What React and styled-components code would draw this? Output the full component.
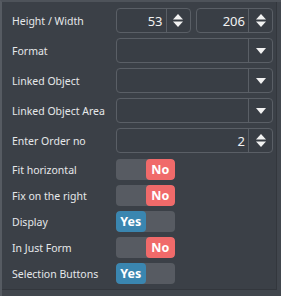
import React from 'react'
import styled, { createGlobalStyle } from 'styled-components'

const Global = createGlobalStyle`
    body {
        margin: 0;
        background: #41464d;
        font-family: "Noto Sans", "Open Sans", sans-serif;
    }
`

const Frame = styled.div`
    width: 281px;
    height: 296px;
    box-sizing: border-box;
    border-left: 2px solid #565b62;
    border-top: 2px solid #4e535a;
    background: #41464d;
`

const Panel = styled.div`
    width: 275px;
    height: 288px;
    box-sizing: border-box;
    background: #3b4047;
    border-right: 1px solid #33373d;
    border-bottom: 1px solid #33373d;
    padding: 6px 0 0 10px;
    display: flex;
    flex-direction: column;
`

const Row = styled.div`
    display: flex;
    align-items: center;
    height: ${p => p.$h}px;
    margin-bottom: ${p => p.$gap}px;
`

const Label = styled.div`
    width: 104px;
    flex: none;
    color: #e6e8ea;
    font-size: 10.5px;
    white-space: nowrap;
`

const Controls = styled.div`
    display: flex;
    gap: 5px;
    width: 157px;
    height: 100%;
`

const Box = styled.div`
    flex: ${p => p.$flex || 1};
    display: flex;
    box-sizing: border-box;
    border: 1px solid #5a5f66;
    border-radius: 4px;
    background: #393e45;
    height: 100%;
`

const Value = styled.div`
    flex: 1;
    display: flex;
    align-items: center;
    justify-content: flex-end;
    padding-right: 3px;
    color: #f2f2f2;
    font-size: 13px;
`

const Side = styled.div`
    width: 23px;
    flex: none;
    display: flex;
    align-items: center;
    justify-content: center;
    border-left: 1px solid #5a5f66;
`

const Toggle = styled.div`
    display: flex;
    width: 59px;
    height: 21px;
    border-radius: 4px;
    background: #575b62;
    overflow: hidden;
`

const Half = styled.div`
    flex: 1;
    display: flex;
    align-items: center;
    justify-content: center;
    color: #fff;
    font-weight: bold;
    font-size: 12.5px;
    background: ${p => (p.$on === 'no' ? '#f06a6a' : p.$on === 'yes' ? '#3a86b0' : 'transparent')};
    border-radius: ${p => (p.$on ? '4px' : '0')};
`

function Spinner() {
    return (
        <svg width="10" height="13" viewBox="0 0 10 13">
            <path d="M5 0 L10 5.5 L0 5.5 Z" fill="#f2f2f2" />
            <path d="M0 7.5 L10 7.5 L5 13 Z" fill="#f2f2f2" />
        </svg>
    )
}

function Caret() {
    return (
        <svg width="10" height="6" viewBox="0 0 10 6">
            <path d="M0 0 L10 0 L5 6 Z" fill="#f2f2f2" />
        </svg>
    )
}

function NumberBox({ value, flex }) {
    return (
        <Box $flex={flex}>
            <Value>{value}</Value>
            <Side><Spinner /></Side>
        </Box>
    )
}

function Select() {
    return (
        <Box>
            <Value />
            <Side><Caret /></Side>
        </Box>
    )
}

function Switch({ on }) {
    return (
        <Toggle>
            <Half $on={on ? 'yes' : null}>{on ? 'Yes' : ''}</Half>
            <Half $on={on ? null : 'no'}>{on ? '' : 'No'}</Half>
        </Toggle>
    )
}

const toggles = [
    ['Fit horizontal', false],
    ['Fix on the right', false],
    ['Display', true],
    ['In Just Form', false],
    ['Selection Buttons', true],
]

export default function App() {
    return (
        <>
            <Global />
            <Frame>
                <Panel>
                    <Row $h={25} $gap={5}>
                        <Label>Height / Width</Label>
                        <Controls>
                            <NumberBox value="53" flex={74} />
                            <NumberBox value="206" flex={77} />
                        </Controls>
                    </Row>
                    <Row $h={25} $gap={5}>
                        <Label>Format</Label>
                        <Controls><Select /></Controls>
                    </Row>
                    <Row $h={25} $gap={5}>
                        <Label>Linked Object</Label>
                        <Controls><Select /></Controls>
                    </Row>
                    <Row $h={25} $gap={5}>
                        <Label>Linked Object Area</Label>
                        <Controls><Select /></Controls>
                    </Row>
                    <Row $h={25} $gap={6}>
                        <Label>Enter Order no</Label>
                        <Controls><NumberBox value="2" /></Controls>
                    </Row>
                    {toggles.map(([label, on]) => (
                        <Row key={label} $h={21} $gap={5}>
                            <Label>{label}</Label>
                            <Switch on={on} />
                        </Row>
                    ))}
                </Panel>
            </Frame>
        </>
    )
}
